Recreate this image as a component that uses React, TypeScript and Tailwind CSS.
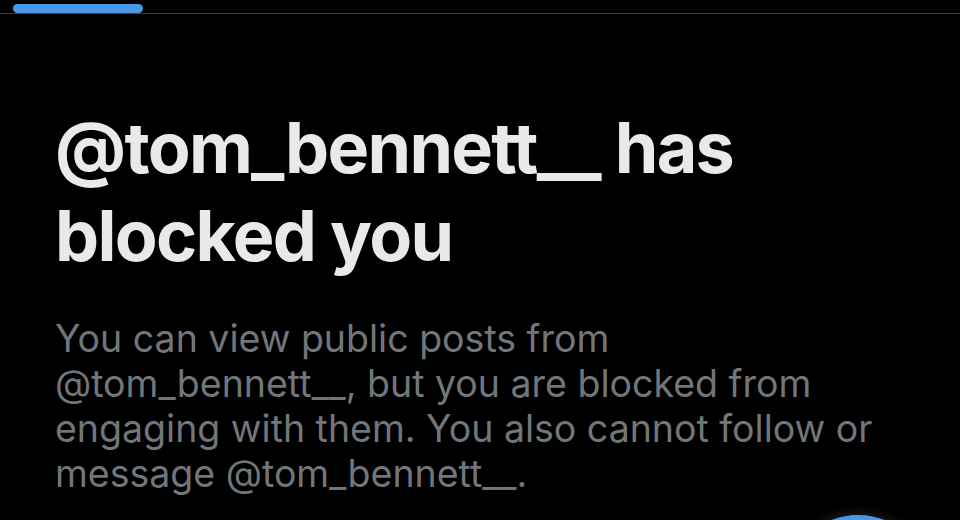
export default function App() {
  return (
    <div className="relative w-[960px] h-[520px] bg-black overflow-hidden" style={{ fontFamily: "Inter, 'Liberation Sans', sans-serif" }}>
      <div className="relative h-[14px] border-b border-[#3a3d40]">
        <div className="absolute left-[13px] top-[4px] w-[130px] h-[9px] rounded-full bg-[#4a98e8]" />
      </div>
      <div className="pl-[55px] pr-[40px]">
        <h1 className="mt-[90px] text-[70px] leading-[88px] font-bold tracking-[-1.7px] text-[#e7e9ea]">
          @tom_bennett__ has<br />blocked you
        </h1>
        <p className="mt-[36px] text-[37.5px] leading-[45px] text-[#71767b]">
          You can view public posts from<br />@tom_bennett__, but you are blocked from<br />engaging with them. You also cannot follow or<br />message @tom_bennett__.
        </p>
      </div>
      <div className="absolute left-[785px] top-[515px] w-[146px] h-[146px] rounded-full bg-[#4a98e8] shadow-[0_0_12px_rgba(120,120,120,0.35)]" />
    </div>
  );
}
